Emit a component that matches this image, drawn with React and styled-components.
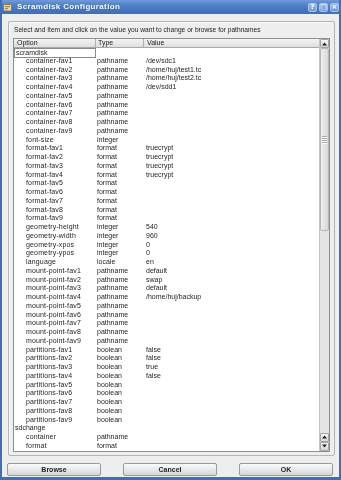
import React from "react";
import styled, { createGlobalStyle } from "styled-components";

const Global = createGlobalStyle`
  html, body { margin: 0; padding: 0; background: #ffffff; }
  * { box-sizing: border-box; }
  body { font-family: "Liberation Sans", Arial, sans-serif; }
`;

const Window = styled.div`
  width: 341px;
  height: 480px;
  display: flex;
  flex-direction: column;
  border-style: solid;
  border-color: #3f70b6;
  border-width: 0 2px 3px 2px;
  background: #3f70b6;
  overflow: hidden;
  will-change: transform;
`;

const TitleBar = styled.div`
  height: 14px;
  flex: none;
  display: flex;
  align-items: center;
  padding: 0 2px 0 3px;
  margin: 0 -2px;
  background: linear-gradient(#6e9ad8 0%, #4a7dc6 45%, #3b6fb9 100%);
`;

const TitleText = styled.div`
  flex: 1;
  margin-left: 5px;
  color: #ffffff;
  font: bold 8px/14px "Liberation Sans", Arial, sans-serif;
  letter-spacing: 0.35px;
  text-shadow: 0 0 1px rgba(0, 0, 0, 0.35);
`;

const TitleButtons = styled.div`
  display: flex;
  gap: 2px;
`;

const TitleButton = styled.div`
  width: 9px;
  height: 9px;
  border-radius: 2px;
  border: 1px solid #a9c4ea;
  background: linear-gradient(#9dbde9, #6f98d4);
  color: #ffffff;
  font: bold 7px/7px "DejaVu Sans", sans-serif;
  display: flex;
  align-items: center;
  justify-content: center;
`;

const Body = styled.div`
  flex: 1;
  display: flex;
  flex-direction: column;
  background: #eeeeee;
  padding: 7px 4px 4px 5px;
`;

const Frame = styled.div`
  flex: 1;
  min-height: 0;
  margin-left: 1px;
  border: 1px solid #b4b4b4;
  border-radius: 2px;
  padding: 3px 4px 3px 4px;
  display: flex;
  flex-direction: column;
  box-shadow: inset 1px 1px 0 #fafafa;
`;

const Label = styled.div`
  height: 9px;
  margin: 0 0 4px 1px;
  font: 6.65px/9px "Liberation Sans", Arial, sans-serif;
  color: #1c1c1c;
  white-space: nowrap;
`;

const ListView = styled.div`
  flex: 1;
  min-height: 0;
  display: flex;
  border: 1px solid #8e8e8e;
  background: #ffffff;
`;

const ListMain = styled.div`
  flex: 1;
  min-width: 0;
  display: flex;
  flex-direction: column;
  overflow: hidden;
`;

const HeaderRow = styled.div`
  height: 9px;
  flex: none;
  display: grid;
  grid-template-columns: 82px 48px 1fr;
  background: linear-gradient(#f4f4f4, #dedede);
  border-bottom: 1px solid #a8a8a8;
`;

const HeaderCell = styled.div`
  font: 7px/8px "Liberation Sans", Arial, sans-serif;
  color: #1a1a1a;
  padding-left: ${(p) => p.$pad}px;
  border-right: ${(p) => (p.$last ? "none" : "1px solid #b0b0b0")};
  white-space: nowrap;
`;

const Rows = styled.div`
  flex: 1;
  min-height: 0;
  overflow: hidden;
`;

const Row = styled.div`
  height: 8.75px;
  display: grid;
  grid-template-columns: 82px 48px 1fr;
  font: 7px/8.75px "Liberation Sans", Arial, sans-serif;
  color: #1e1e1e;
  white-space: nowrap;
`;

const OptionCell = styled.div`
  padding-left: ${(p) => (p.$child ? 12 : 1)}px;
  letter-spacing: ${(p) => (p.$child ? "0.15px" : "0")};
  ${(p) =>
    p.$focus
      ? `border: 1px solid #8a8a8a; line-height: 7px; height: 9.5px; background:#fff;`
      : ""}
  overflow: hidden;
`;

const TypeCell = styled.div`
  padding-left: 1px;
`;

const ValueCell = styled.div`
  padding-left: 2px;
`;

const ScrollBar = styled.div`
  width: 10px;
  flex: none;
  display: flex;
  flex-direction: column;
  background: #e4e4e4;
  border-left: 1px solid #c4c4c4;
`;

const ArrowButton = styled.div`
  height: 9px;
  flex: none;
  border: 1px solid #a4a4a4;
  border-radius: 1px;
  background: linear-gradient(#f6f6f6, #d6d6d6);
  display: flex;
  align-items: center;
  justify-content: center;
`;

const Trough = styled.div`
  flex: 1;
  display: flex;
  flex-direction: column;
`;

const Thumb = styled.div`
  height: 183px;
  border: 1px solid #b6b6b6;
  border-radius: 2px;
  background: linear-gradient(90deg, #eeeeee, #d8d8d8);
  display: flex;
  flex-direction: column;
  align-items: center;
  justify-content: center;
  gap: 1px;
`;

const Grip = styled.div`
  width: 5px;
  height: 1px;
  background: #a8a8a8;
  box-shadow: 0 1px 0 #ffffff;
`;

const ButtonRow = styled.div`
  margin-top: 7px;
  height: 13px;
  flex: none;
  display: flex;
  justify-content: space-between;
  padding-right: 2px;
`;

const Button = styled.div`
  width: 94px;
  height: 13px;
  border: 1px solid #9a9a9a;
  border-radius: 2px;
  background: linear-gradient(#fafafa, #e9e9e9 50%, #d6d6d6);
  font: bold 7px/11px "Liberation Sans", Arial, sans-serif;
  color: #1e1e1e;
  text-align: center;
`;

const Arrow = ({ down }) => (
  <svg width="5" height="4" viewBox="0 0 5 4">
    {down ? <path d="M0 0.5h5L2.5 3.5z" fill="#222" /> : <path d="M0 3.5h5L2.5 0.5z" fill="#222" />}
  </svg>
);

const AppIcon = () => (
  <svg width="9" height="9" viewBox="0 0 9 9">
    <rect x="0.5" y="1.5" width="8" height="6.5" rx="1" fill="#e8d9a6" stroke="#8a6a2a" strokeWidth="0.8" />
    <rect x="2" y="3" width="5" height="1.2" fill="#b08a3a" />
    <rect x="2" y="5" width="3" height="1.2" fill="#7a8fb0" />
  </svg>
);

const range = (n) => Array.from({ length: n }, (_, i) => i + 1);
const fill = (prefix, type, values) =>
  range(9).map((i) => [`${prefix}-fav${i}`, type, values[i - 1] || "", true]);

const rows = [
  ["scramdisk", "", "", false, true],
  ...fill("container", "pathname", ["/dev/sdc1", "/home/huj/test1.tc", "/home/huj/test2.tc", "/dev/sdd1"]),
  ["font-size", "integer", "", true],
  ...fill("format", "format", ["truecrypt", "truecrypt", "truecrypt", "truecrypt"]),
  ["geometry-height", "integer", "540", true],
  ["geometry-width", "integer", "960", true],
  ["geometry-xpos", "integer", "0", true],
  ["geometry-ypos", "integer", "0", true],
  ["language", "locale", "en", true],
  ...fill("mount-point", "pathname", ["default", "swap", "default", "/home/huj/backup"]),
  ...fill("partitions", "boolean", ["false", "false", "true", "false"]),
  ["sdchange", "", "", false],
  ["container", "pathname", "", true],
  ["format", "format", "", true],
];

export default function App() {
  return (
    <>
      <Global />
      <Window>
        <TitleBar>
          <AppIcon />
          <TitleText>Scramdisk Configuration</TitleText>
          <TitleButtons>
            <TitleButton>?</TitleButton>
            <TitleButton>□</TitleButton>
            <TitleButton>×</TitleButton>
          </TitleButtons>
        </TitleBar>
        <Body>
          <Frame>
            <Label>Select and Item and click on the value you want to change or browse for pathnames</Label>
            <ListView>
              <ListMain>
                <HeaderRow>
                  <HeaderCell $pad={3}>Option</HeaderCell>
                  <HeaderCell $pad={2}>Type</HeaderCell>
                  <HeaderCell $pad={3} $last>Value</HeaderCell>
                </HeaderRow>
                <Rows>
                  {rows.map(([opt, type, value, child, focus], i) => (
                    <Row key={i}>
                      <OptionCell $child={child} $focus={focus}>{opt}</OptionCell>
                      <TypeCell>{type}</TypeCell>
                      <ValueCell>{value}</ValueCell>
                    </Row>
                  ))}
                </Rows>
              </ListMain>
              <ScrollBar>
                <ArrowButton><Arrow /></ArrowButton>
                <Trough>
                  <Thumb>
                    <Grip />
                    <Grip />
                    <Grip />
                    <Grip />
                  </Thumb>
                </Trough>
                <ArrowButton><Arrow /></ArrowButton>
                <ArrowButton><Arrow down /></ArrowButton>
              </ScrollBar>
            </ListView>
          </Frame>
          <ButtonRow>
            <Button>Browse</Button>
            <Button>Cancel</Button>
            <Button>OK</Button>
          </ButtonRow>
        </Body>
      </Window>
    </>
  );
}
